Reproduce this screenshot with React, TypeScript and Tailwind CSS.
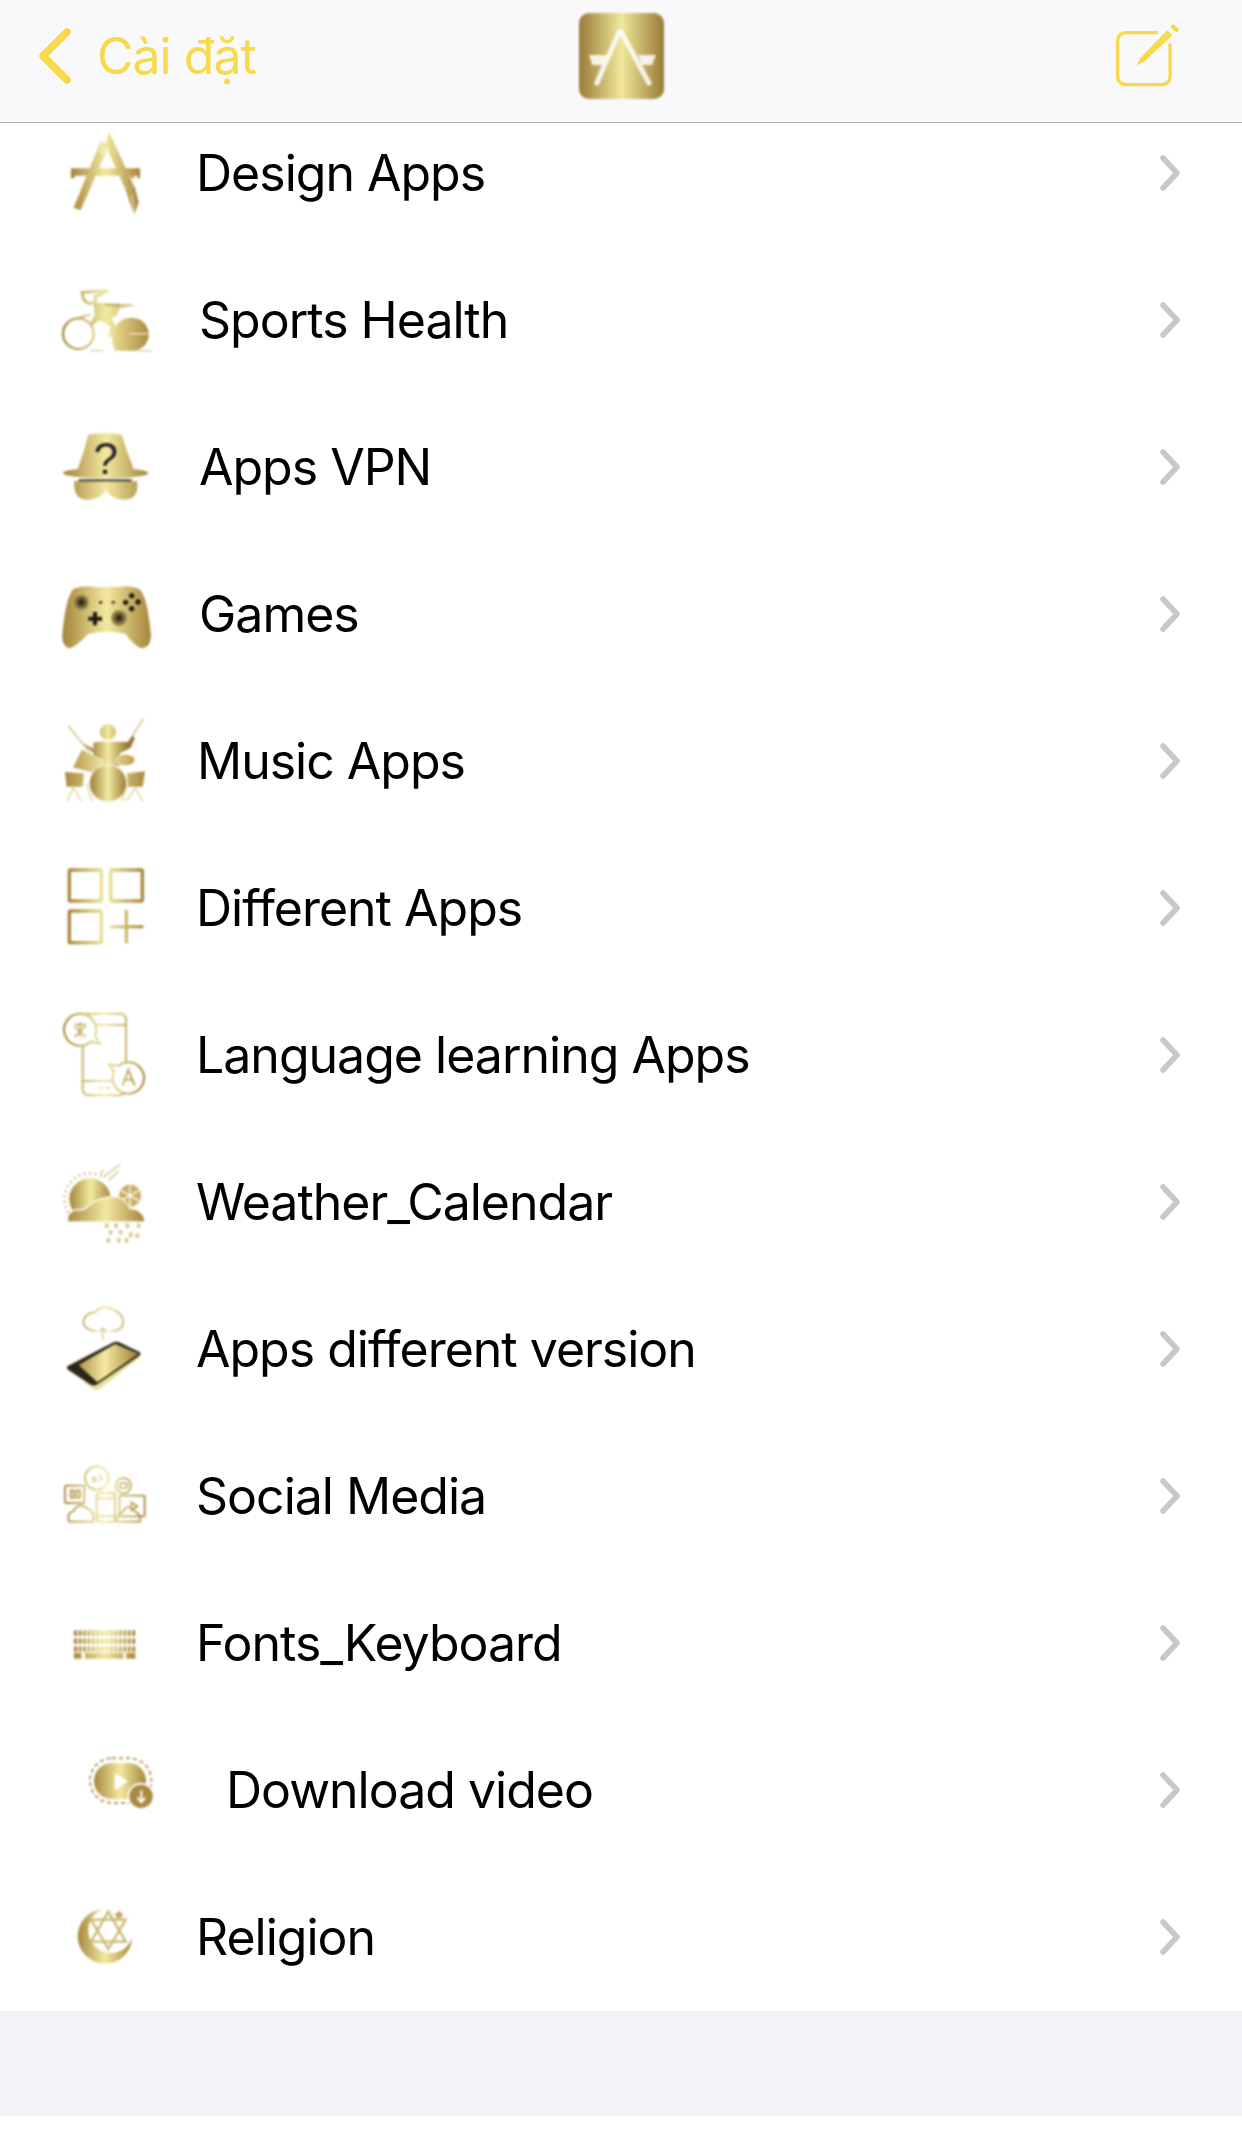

import type { ReactNode } from "react";

const GOLD = "#a98a3f";

function Icon({ cy, id, x1 = 60, x2 = 330, children }: { cy: number; id: string; x1?: number; x2?: number; children: ReactNode }) {
  return (
    <svg viewBox={`0 ${cy - 195} 390 390`} className="h-[130px] w-[130px] shrink-0 blur-[0.8px]">
      <defs>
        <linearGradient id={id} gradientUnits="userSpaceOnUse" x1={x1} x2={x2} y1="0" y2="0">
          <stop offset="0" stopColor="#a5843a" />
          <stop offset="0.5" stopColor="#f2eaa0" />
          <stop offset="1" stopColor="#a5843a" />
        </linearGradient>
      </defs>
      {children}
    </svg>
  );
}

function DesignIcon() {
  return (
    <Icon cy={520} id="g-design" x1={93} x2={300}>
      <path d="M93 506 H300 V536 H292 V528 H282 V536 H272 V528 H104 V536 H93 Z" fill="url(#g-design)" />
      <path d="M182 425 L208 435 L122 632 L101 624 Z" fill="url(#g-design)" />
      <path d="M207 396 L282 560 L254 564 L196 436 Z" fill="url(#g-design)" />
      <path d="M254 565 L284 560 L296 608 L283 645 L270 610 Z" fill="url(#g-design)" />
      <path d="M180 440 L204 449 M175 453 L199 462" stroke="#fff" strokeWidth="3" />
      <path d="M276 585 L283 640" stroke="#fff" strokeWidth="2.5" />
    </Icon>
  );
}

function BikeIcon() {
  return (
    <Icon cy={151} id="g-bike" x1={65} x2={335}>
      <circle cx="115" cy="192" r="46" fill="none" stroke="url(#g-bike)" strokeWidth="7" />
      <path d="M225 243 Q213 215 218 190 Q232 146 268 145 A49 49 0 0 1 285 243 Z" fill="url(#g-bike)" />
      <path d="M268 192 H330" stroke="#f4eed2" strokeWidth="4" />
      <path d="M150 243 H190 M290 243 H335" stroke="#cfc9b0" strokeWidth="4" />
      <path d="M126 68 L205 63 Q182 76 166 80 Q172 100 148 102 Q128 96 126 68 Z" fill="none" stroke="url(#g-bike)" strokeWidth="8" />
      <path d="M160 98 L240 102 L285 106 L240 116 L228 140 L214 146 L226 170 L212 205 L205 200 L212 172 L180 150 L155 170 L150 160 L164 135 Z" fill="url(#g-bike)" />
      <path d="M152 135 Q130 138 110 147" fill="none" stroke="url(#g-bike)" strokeWidth="5" />
      <path d="M195 105 L240 107" stroke="#6e5f30" strokeWidth="2.5" />
    </Icon>
  );
}

function HatIcon() {
  return (
    <Icon cy={592} id="g-hat" x1={70} x2={325}>
      <path d="M145 495 Q195 485 245 495 Q262 550 282 600 Q200 620 112 600 Q132 550 145 495 Z" fill="url(#g-hat)" />
      <ellipse cx="197" cy="610" rx="128" ry="16" fill="url(#g-hat)" />
      <path d="M103 634 H291 Q298 690 252 690 Q215 690 198 662 Q182 690 142 690 Q98 690 103 634 Z" fill="url(#g-hat)" />
      <path d="M116 632 H275" stroke="#222" strokeWidth="5" />
      <text x="197" y="612" textAnchor="middle" fontSize="132" fontFamily="'Liberation Sans', sans-serif" fill="#222">?</text>
    </Icon>
  );
}

function GamepadIcon() {
  return (
    <Icon cy={1033} id="g-pad" x1={68} x2={332}>
      <path d="M100 958 Q130 945 165 952 H235 Q270 945 298 958 Q322 980 332 1090 Q336 1132 305 1136 Q285 1130 255 1092 Q200 1080 145 1092 Q110 1130 88 1136 Q62 1128 68 1085 Q78 982 100 958 Z" fill="url(#g-pad)" />
      <circle cx="124" cy="998" r="22" fill="#8b7a42" />
      <circle cx="124" cy="998" r="13" fill="#4c4424" />
      <circle cx="124" cy="998" r="5" fill="#1b1a12" />
      <circle cx="237" cy="1045" r="23" fill="#8b7a42" />
      <circle cx="237" cy="1045" r="13" fill="#4c4424" />
      <circle cx="237" cy="1045" r="5" fill="#1b1a12" />
      <circle cx="182" cy="998" r="5" fill="#3c3720" />
      <circle cx="220" cy="998" r="5" fill="#3c3720" />
      <circle cx="275" cy="978" r="8" fill="#221f14" />
      <circle cx="257" cy="998" r="8" fill="#221f14" />
      <circle cx="294" cy="997" r="8" fill="#221f14" />
      <circle cx="275" cy="1017" r="8" fill="#221f14" />
      <path d="M145 1047 H186 M165 1027 V1067" stroke="#1d1b12" strokeWidth="12" />
    </Icon>
  );
}

function DrumsIcon() {
  return (
    <Icon cy={185} id="g-drum" x1={70} x2={320}>
      <defs>
        <linearGradient id="g-drum2" gradientUnits="userSpaceOnUse" x1="148" x2="260" y1="0" y2="0">
          <stop offset="0" stopColor="#9a7a34" />
          <stop offset="0.5" stopColor="#f3eba2" />
          <stop offset="1" stopColor="#9a7a34" />
        </linearGradient>
      </defs>
      <circle cx="204" cy="98" r="24" fill="url(#g-drum2)" />
      <path d="M85 80 L150 160 M310 58 L272 118" stroke="#d2c690" strokeWidth="5" />
      <path d="M128 132 L160 148 V130 Q180 126 200 127 H232 L262 128 L280 108 L284 118 L272 145 L240 162 V200 H160 V160 Z" fill="url(#g-drum2)" />
      <path d="M125 150 L192 185 L165 222 L98 205 Z" fill="url(#g-drum)" stroke="#fff" strokeWidth="2" />
      <ellipse cx="256" cy="182" rx="29" ry="17" fill="url(#g-drum)" stroke="#fff" strokeWidth="2" />
      <path d="M75 218 L132 222 L128 262 L80 262 Z" fill="url(#g-drum)" />
      <path d="M262 222 L315 216 L308 262 L262 262 Z" fill="url(#g-drum)" />
      <circle cx="204" cy="252" r="56" fill="url(#g-drum2)" stroke="#fff" strokeWidth="3" />
      <path d="M100 265 L80 306 M100 265 L125 306 M140 250 L155 306 M285 265 L260 306 M285 265 L308 306 M265 250 L245 306" stroke="#e6dca0" strokeWidth="5" />
    </Icon>
  );
}

function DifferentIcon() {
  return (
    <Icon cy={626} id="g-diff" x1={85} x2={310}>
      <g fill="none" stroke="url(#g-diff)" strokeWidth="10">
        <rect x="88" y="512" width="96" height="93" rx="3" />
        <rect x="212" y="512" width="95" height="93" rx="3" />
        <rect x="88" y="635" width="96" height="95" rx="3" />
        <path d="M209 682 H310 M259 632 V732" strokeWidth="9" />
      </g>
    </Icon>
  );
}

function LanguageIcon() {
  return (
    <Icon cy={1066} id="g-lang" x1={70} x2={315}>
      <g fill="none" stroke="url(#g-lang)" strokeWidth="6">
        <rect x="128" y="942" width="130" height="245" rx="18" />
        <path d="M160 976 H258 M128 1144 H220" />
        <path d="M120 942 A48 48 0 1 0 152 1026 L180 1032 L165 1008 A48 48 0 0 0 120 942 Z" fill="#fff" />
        <path d="M265 1088 A47 47 0 1 1 222 1116 L206 1094 L236 1098 A47 47 0 0 1 265 1088 Z" fill="#fff" />
        <path d="M248 1158 L265 1110 L284 1158 M256 1140 H276" />
        <path d="M104 975 H138 M120 968 V1012 M104 1012 L138 978 M104 982 L138 1012" strokeWidth="5" />
        <path d="M178 1165 H190 M198 1165 H210" strokeWidth="6" />
      </g>
    </Icon>
  );
}

const rays = [150, 162, 174, 186, 198, 210, 222, 234, 246, 258, 270, 282, 294];
const drops = [[200, 228], [228, 228], [262, 228], [296, 228], [212, 248], [242, 248], [272, 255], [292, 258], [205, 272], [236, 272], [260, 272]];

function WeatherIcon() {
  return (
    <Icon cy={157} id="g-sun" x1={80} x2={315}>
      <defs>
        <linearGradient id="g-sun2" gradientUnits="userSpaceOnUse" x1="88" x2="215" y1="0" y2="0">
          <stop offset="0" stopColor="#a5843a" />
          <stop offset="0.5" stopColor="#f2eaa0" />
          <stop offset="1" stopColor="#a5843a" />
        </linearGradient>
      </defs>
      {rays.map((a) => {
        const r = (a * Math.PI) / 180;
        const len = a > 282 ? 96 : 82;
        return (
          <line key={a} x1={150 + 72 * Math.cos(r)} y1={148 + 72 * Math.sin(r)} x2={150 + len * Math.cos(r)} y2={148 + len * Math.sin(r)} stroke="#c9b777" strokeWidth="4" />
        );
      })}
      <path d="M190 82 L240 45 M205 92 L235 65" stroke="#d7cc9a" strokeWidth="5" />
      <circle cx="150" cy="148" r="62" fill="url(#g-sun2)" />
      <circle cx="270" cy="138" r="33" fill="#c9b066" />
      <path d="M270 108 V168 M244 123 L296 153 M244 153 L296 123" stroke="#fff" strokeWidth="4" />
      <path d="M82 217 Q80 185 110 180 Q130 185 150 165 Q180 142 218 140 Q252 140 270 176 Q312 180 315 217 Z" fill="url(#g-sun)" stroke="#fff" strokeWidth="4" />
      {drops.map(([x, y]) => (
        <ellipse key={`${x}-${y}`} cx={x} cy={y} rx="6" ry="8" fill="#d7c98a" />
      ))}
    </Icon>
  );
}

function UploadIcon() {
  return (
    <Icon cy={598} id="g-up" x1={100} x2={290}>
      <path d="M168 545 Q130 540 130 515 Q135 490 165 488 Q185 465 215 478 Q250 490 250 520 Q245 545 212 545" fill="none" stroke="url(#g-up)" strokeWidth="5" />
      <path d="M188 572 V536 M176 548 L188 535 L200 548" fill="none" stroke="#d4c787" strokeWidth="4" />
      <path d="M130 698 L165 720 Q172 722 182 716 L300 622 L302 612 L165 700 Z" fill="#e9e09a" />
      <path d="M82 650 L222 577 Q232 574 242 580 L300 608 Q304 614 296 620 L170 705 Q160 710 150 704 L86 662 Q78 656 82 650 Z" fill="#2a2618" />
      <path d="M116 646 L225 583 L296 612 L172 698 Z" fill="url(#g-up)" />
    </Icon>
  );
}

function SocialIcon() {
  return (
    <Icon cy={1039} id="g-soc" x1={72} x2={318}>
      <g fill="none" stroke="url(#g-soc)" strokeWidth="5.5">
        <circle cx="170" cy="985" r="35" />
        <path d="M155 985 H166 V995 H155 M178 975 L185 985 L178 995" />
        <circle cx="250" cy="1008" r="23" />
        <ellipse cx="250" cy="1008" rx="12" ry="8" />
        <rect x="75" y="1008" width="58" height="52" rx="4" />
        <rect x="92" y="1022" width="10" height="22" />
        <rect x="110" y="1022" width="10" height="22" />
        <rect x="170" y="1030" width="55" height="86" rx="8" />
        <path d="M170 1046 H225 M170 1100 H225" />
        <rect x="238" y="1038" width="76" height="62" rx="3" />
        <path d="M274 1058 L292 1070 L274 1082 Z" />
        <path d="M88 1116 Q78 1090 100 1085 Q115 1056 140 1075 Q165 1085 160 1116 Z" />
        <path d="M228 1116 Q232 1095 248 1088 Q262 1058 285 1085 Q304 1095 300 1116 Z" />
      </g>
    </Icon>
  );
}

const keyRows = [212, 236, 260];
const keyCols = Array.from({ length: 14 }, (_, i) => 102 + i * 13.4);

function KeyboardIcon() {
  return (
    <Icon cy={250} id="g-key" x1={100} x2={288}>
      {keyRows.flatMap((y) =>
        keyCols.map((x) => <rect key={`${x}-${y}`} x={x} y={y} width="9.5" height="17" rx="2" fill="url(#g-key)" />),
      )}
      <rect x="102" y="280" width="23" height="17" rx="2" fill="url(#g-key)" />
      <rect x="135" y="280" width="115" height="17" rx="2" fill="url(#g-key)" />
      <rect x="258" y="280" width="28" height="17" rx="2" fill="url(#g-key)" />
    </Icon>
  );
}

function DownloadIcon() {
  return (
    <Icon cy={691} id="g-dl" x1={160} x2={320}>
      <rect x="150" y="596" width="184" height="134" rx="66" fill="none" stroke="#b79c5b" strokeWidth="6" strokeDasharray="12 9" />
      <rect x="162" y="610" width="156" height="108" rx="54" fill="url(#g-dl)" />
      <path d="M224 640 L264 665 L224 692 Z" fill="#fff" />
      <circle cx="303" cy="710" r="38" fill={GOLD} stroke="#fff" strokeWidth="6" />
      <path d="M304 692 V726 M292 714 L304 728 L316 714" fill="none" stroke="#fff" strokeWidth="6" />
    </Icon>
  );
}

function ReligionIcon() {
  return (
    <Icon cy={1132} id="g-rel" x1={112} x2={278}>
      <path d="M190 1048 A82 82 0 1 0 277 1135 A68 68 0 1 1 190 1048 Z" fill="url(#g-rel)" />
      <g fill="none" stroke="#cdb871" strokeWidth="7">
        <path d="M205 1056 L257 1146 H153 Z" />
        <path d="M205 1168 L153 1080 H257 Z" />
      </g>
      <path d="M237 1050 L242 1061 L253 1062 L244 1069 L247 1080 L237 1073 L227 1080 L230 1069 L221 1062 L232 1061 Z" fill="#c1a75f" />
    </Icon>
  );
}

const rows = [
  { label: "Design Apps", icon: <DesignIcon />, indent: "ml-[26px]" },
  { label: "Sports Health", icon: <BikeIcon />, indent: "ml-[29px]" },
  { label: "Apps VPN", icon: <HatIcon />, indent: "ml-[29px]" },
  { label: "Games", icon: <GamepadIcon />, indent: "ml-[29px]" },
  { label: "Music Apps", icon: <DrumsIcon />, indent: "ml-[27px]" },
  { label: "Different Apps", icon: <DifferentIcon />, indent: "ml-[26px]" },
  { label: "Language learning Apps", icon: <LanguageIcon />, indent: "ml-[26px]" },
  { label: "Weather_Calendar", icon: <WeatherIcon />, indent: "ml-[26px]" },
  { label: "Apps different version", icon: <UploadIcon />, indent: "ml-[26px]" },
  { label: "Social Media", icon: <SocialIcon />, indent: "ml-[26px]" },
  { label: "Fonts_Keyboard", icon: <KeyboardIcon />, indent: "ml-[26px]" },
  { label: "Download video", icon: <DownloadIcon />, indent: "ml-[56px]" },
  { label: "Religion", icon: <ReligionIcon />, indent: "ml-[26px]" },
];

function Row({ label, icon, indent }: { label: string; icon: ReactNode; indent: string }) {
  return (
    <div className="flex h-[147px] items-center pl-[40px] pr-[62px]">
      {icon}
      <span className={`${indent} flex-1 text-[50px] leading-none tracking-[-1px] text-black`}>{label}</span>
      <svg viewBox="0 0 20 36" className="h-[36px] w-[20px]">
        <path d="M3 3 L17 18 L3 33" fill="none" stroke="#c7c7cc" strokeWidth="5.5" strokeLinecap="round" strokeLinejoin="round" />
      </svg>
    </div>
  );
}

export default function App() {
  return (
    <div className="h-[2138px] w-[1242px] overflow-hidden bg-white font-['Inter','Noto_Sans',sans-serif]">
      <header className="relative z-10 grid h-[123px] grid-cols-[1fr_85px_1fr] items-start border-b border-[#b4b4b6] bg-[#f9f9fb]">
        <div className="flex items-center pl-[38px] pt-[28px] text-[#f8d94c]">
          <svg viewBox="0 0 34 56" className="h-[56px] w-[34px]">
            <path d="M29 4 L5 28 L29 52" fill="none" stroke="#f8d94c" strokeWidth="7.5" strokeLinecap="round" strokeLinejoin="round" />
          </svg>
          <span className="ml-[25px] text-[50px] leading-none tracking-[-1px]">Cài đặt</span>
        </div>
        <svg viewBox="0 0 85 86" className="mt-[13px] h-[86px] w-[85px] blur-[0.8px]">
          <defs>
            <linearGradient id="logo-gold" x1="0" x2="1" y1="0" y2="0">
              <stop offset="0" stopColor="#9a7a38" />
              <stop offset="0.5" stopColor="#efe89a" />
              <stop offset="1" stopColor="#9a7a38" />
            </linearGradient>
          </defs>
          <rect width="85" height="86" rx="10" fill="url(#logo-gold)" />
          <path d="M10 42 H28 L24 52 H13 Z M59 42 H77 L73 52 H63 Z" fill="#fff" opacity="0.85" />
          <path d="M41 17 L17 72 M41 17 L71 72" fill="none" stroke="#fff" strokeWidth="5" opacity="0.85" />
        </svg>
        <div className="flex justify-end pr-[62px] pt-[22px]">
          <svg viewBox="340 60 195 200" className="h-[66px] w-[65px]">
            <path d="M470 92 H375 Q347 92 347 120 V222 Q347 250 375 250 H478 Q506 250 506 222 V125" fill="none" stroke="#f8d94c" strokeWidth="10" />
            <path d="M405 192 L415 170 L497 85 L513 100 L428 180 Z" fill="#f8d94c" />
            <path d="M514 74 L526 84" stroke="#f8d94c" strokeWidth="13" strokeLinecap="round" />
          </svg>
        </div>
      </header>
      <main className="-mt-[24px] pb-px">
        {rows.map((row) => (
          <Row key={row.label} {...row} />
        ))}
      </main>
      <div className="h-[105px] bg-[#f2f2f7]" />
    </div>
  );
}
